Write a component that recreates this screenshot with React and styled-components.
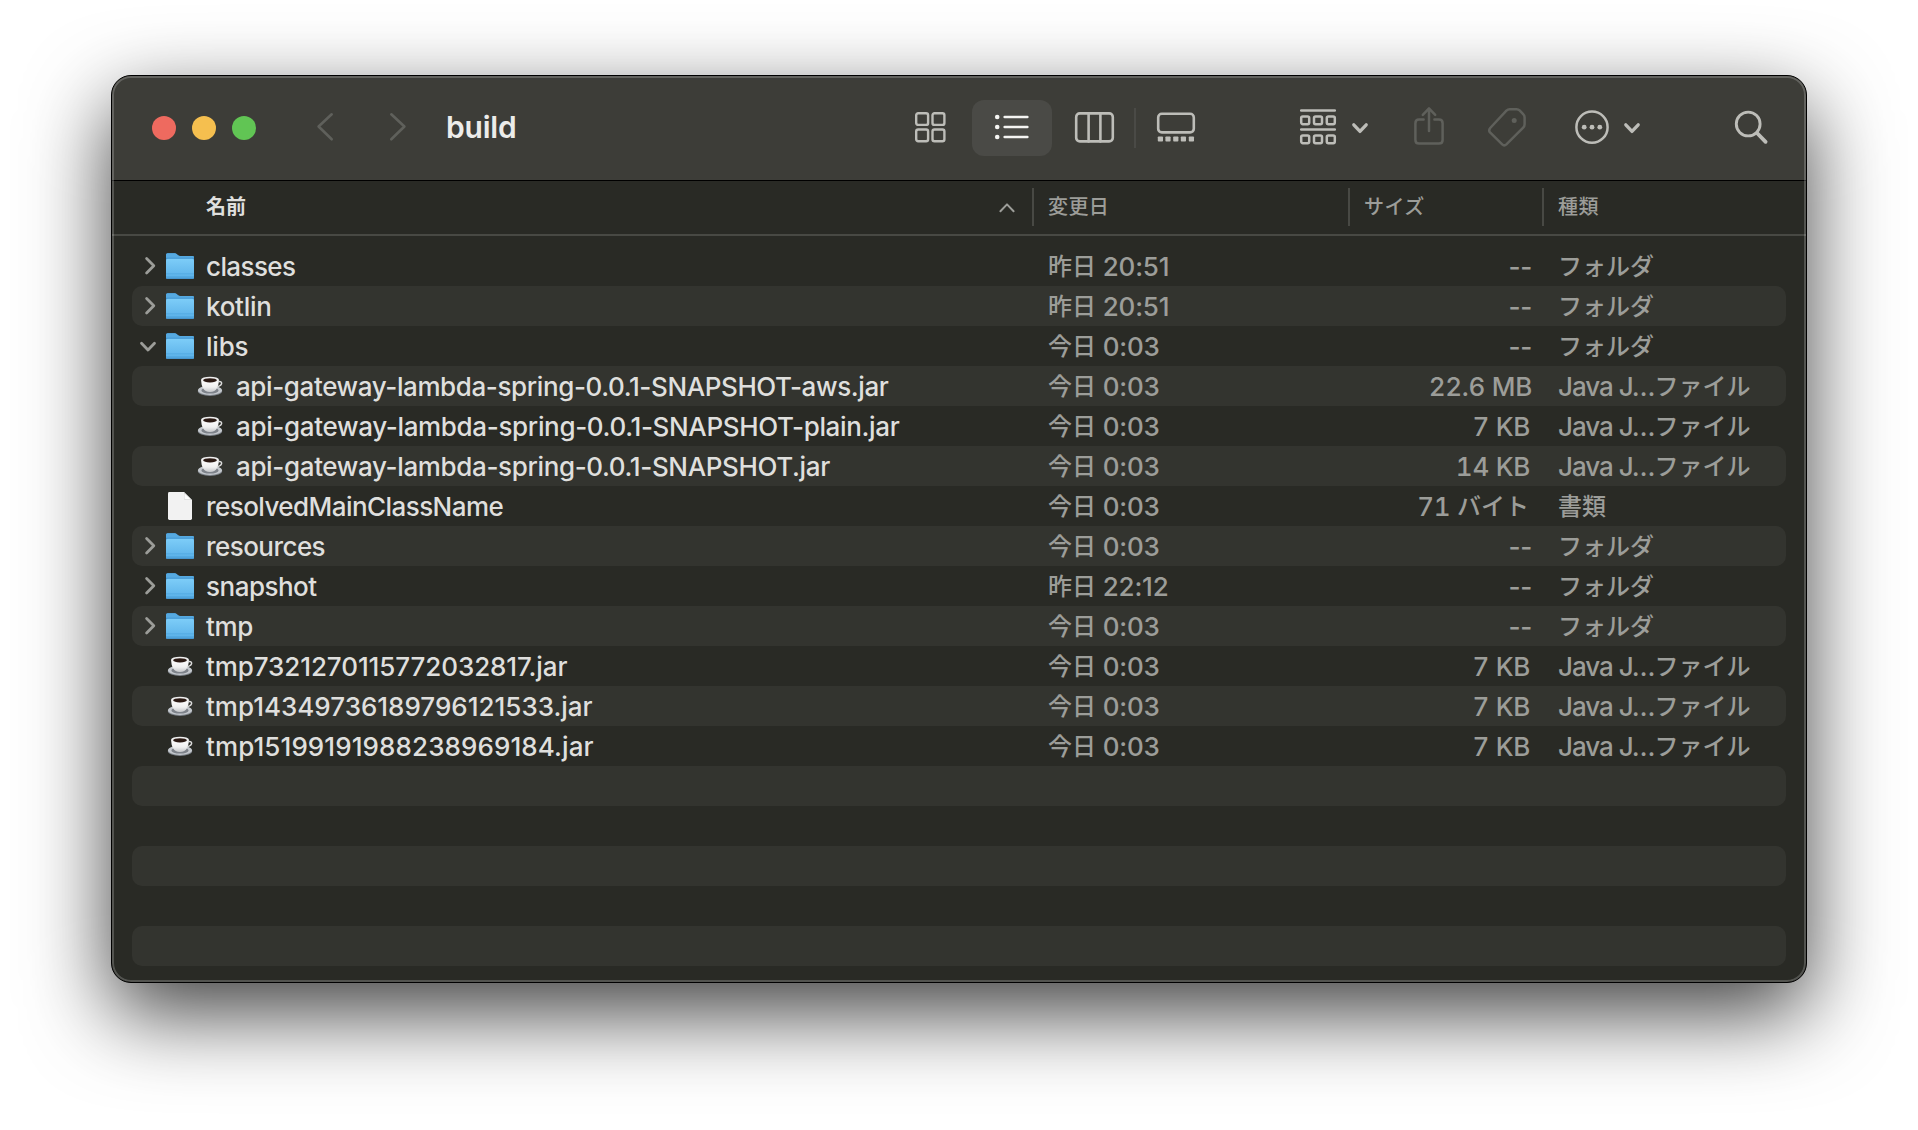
import React from "react";
import styled, { createGlobalStyle, css } from "styled-components";

const color = {
  toolbar: "#3d3d38",
  body: "#292a25",
  stripe: "#33342f",
  selected: "#4a4a46",
  icon: "#bdbdb8",
  iconOff: "#5f605b",
  text: "#dfdfdd",
  textDim: "#9c9d99",
  rule: "#484944",
};

const GlobalStyle = createGlobalStyle`
  * { box-sizing: border-box; }
  html, body { margin: 0; background: #fff; }
  body {
    font-family: "Inter", "Noto Sans CJK JP", sans-serif;
    -webkit-font-smoothing: antialiased;
    overflow: hidden;
  }
`;

const Desktop = styled.div`
  width: 1918px;
  height: 1130px;
  padding: 75px 111px 147px;
  overflow: hidden;
`;

const Window = styled.div`
  position: relative;
  display: flex;
  flex-direction: column;
  height: 908px;
  border: 1px solid #000;
  border-radius: 20px;
  overflow: hidden;
  background: ${color.body};
  box-shadow: 0 30px 84px rgba(0, 0, 0, 0.75);

  &::after {
    content: "";
    position: absolute;
    inset: 0;
    border-radius: 19px;
    box-shadow: inset 0 0 0 2px rgba(255, 255, 255, 0.2);
    pointer-events: none;
  }
`;

const Toolbar = styled.header`
  display: flex;
  align-items: center;
  height: 105px;
  padding-left: 40px;
  background: ${color.toolbar};
  border-bottom: 1px solid #000;
`;

const Lights = styled.div`
  display: flex;
  gap: 16px;
`;

const Light = styled.span`
  width: 24px;
  height: 24px;
  border-radius: 50%;
  background: ${(p) => p.$tone};
`;

const Nav = styled.nav`
  display: flex;
  align-items: center;
  gap: 57px;
  margin-left: 61px;
  padding-bottom: 2px;
`;

const Title = styled.h1`
  width: 443px;
  margin: 0 0 0 40px;
  padding-bottom: 2px;
  font-size: 30px;
  font-weight: 600;
  line-height: 40px;
  letter-spacing: -0.2px;
  color: #ececea;
`;

const Views = styled.div`
  display: flex;
  align-items: center;
`;

const Segment = styled.span`
  display: flex;
  align-items: center;
  justify-content: center;
  width: 80px;
  height: 56px;
  margin: 0 1px;
  padding-bottom: 2px;
  border-radius: 12px;
  background: ${(p) => (p.$active ? color.selected : "transparent")};
`;

const SegmentRule = styled.i`
  width: 2px;
  height: 40px;
  margin: 0 -1px;
  background: ${color.selected};
`;

const Tool = styled.span`
  display: flex;
  align-items: center;
  gap: ${(p) => p.$gap || 0}px;
  margin-left: ${(p) => p.$before}px;
  padding-bottom: 2px;
`;

const Icon = styled.svg`
  display: block;
  flex: none;
  overflow: visible;
  fill: none;
  stroke: ${(p) => p.$tone || color.icon};
  stroke-width: ${(p) => p.$weight || 2.5};
  stroke-linecap: round;
  stroke-linejoin: round;
`;

const HeaderRow = styled.div`
  display: grid;
  grid-template-columns: 920px 316px 194px 1fr;
  height: 55px;
  padding-top: 7px;
  border-bottom: 2px solid ${color.rule};
`;

const HeaderCell = styled.div`
  display: flex;
  align-items: center;
  justify-content: space-between;
  height: 38px;
  padding-left: 14px;
  border-left: 2px solid ${color.rule};
  font-size: 20px;
  font-weight: 500;
  letter-spacing: 0.4px;
  line-height: 38px;
  color: ${color.textDim};

  ${(p) =>
    p.$sorted &&
    css`
      padding: 0 17px 0 94px;
      border-left: 0;
      font-weight: 700;
      letter-spacing: 0;
      color: ${color.text};
    `}
`;

const List = styled.div`
  padding: 10px 20px 0;
`;

const Row = styled.div`
  display: grid;
  grid-template-columns: 916px 302px 182px 1fr;
  height: 40px;
  border-radius: 10px;
  font-size: 26px;
  font-weight: 500;
  line-height: 40px;
  white-space: pre;
  color: ${color.textDim};

  &:nth-child(even) {
    background: ${color.stripe};
  }
`;

const NameCell = styled.div`
  display: flex;
  align-items: center;
  height: 40px;
  padding-left: ${(p) => (p.$nested ? 30 : 0)}px;
  color: ${color.text};
`;

const Disclosure = styled.span`
  display: flex;
  align-items: center;
  flex: none;
  width: 34px;
  height: 40px;
  padding-left: ${(p) => (p.$open ? 8 : 13)}px;
  padding-top: ${(p) => (p.$open ? 1 : 0)}px;
  padding-bottom: ${(p) => (p.$open ? 0 : 1)}px;
`;

const FileName = styled.span`
  margin-left: 12px;
  padding-top: 2px;
  letter-spacing: ${(p) => p.$track}px;
`;

const Cell = styled.div`
  padding-top: 1px;
`;

const DateCell = styled(Cell)`
  letter-spacing: -0.2px;
`;

const SizeCell = styled(Cell)`
  text-align: right;
  font-variant-numeric: ${(p) => (p.$empty ? "normal" : "tabular-nums")};
  letter-spacing: -0.3px;
  padding-right: ${(p) => p.$inset || 0}px;
`;

const KindCell = styled(Cell)`
  padding-left: 26px;
  letter-spacing: -1px;
`;

const Japanese = styled.span`
  font-family: "Noto Sans CJK JP", sans-serif;
  font-size: 24px;
  font-weight: 500;
  line-height: 1;
  letter-spacing: 0;
  vertical-align: 1px;
`;

const Back = () => (
  <Icon width="16" height="28" viewBox="0 0 16 28" $tone={color.iconOff} $weight={2.6}>
    <path d="M14.7 1.3 1.6 13.5 14.7 26.3" />
  </Icon>
);

const Forward = () => (
  <Icon width="16" height="28" viewBox="0 0 16 28" $tone={color.iconOff} $weight={2.6}>
    <path d="M1.3 1.3 14.4 13.5 1.3 26.3" />
  </Icon>
);

const GridIcon = () => (
  <Icon width="31" height="31" viewBox="0 0 31 31" $weight={2.4}>
    {[1.2, 17.5].map((x) =>
      [1.2, 17.5].map((y) => <rect key={x + "-" + y} x={x} y={y} width="11.9" height="11.7" rx="2" />)
    )}
  </Icon>
);

const ListIcon = () => (
  <Icon width="34" height="28" viewBox="0 0 34 28" $tone="#f4f4f2" $weight={2.5}>
    {[4, 14, 24].map((y) => (
      <g key={y}>
        <circle cx="2.2" cy={y} r="2.3" fill="#f4f4f2" stroke="none" />
        <path d={`M9.6 ${y}H32.4`} />
      </g>
    ))}
  </Icon>
);

const ColumnsIcon = () => (
  <Icon width="39" height="31" viewBox="0 0 39 31" $weight={2.6}>
    <rect x="1.2" y="1.4" width="36.6" height="28" rx="3.6" />
    <path d="M13.6 1.4v28M25.4 1.4v28" />
  </Icon>
);

const GalleryIcon = () => (
  <Icon width="38" height="31" viewBox="0 0 38 31" $weight={2.6}>
    <rect x="1.2" y="1.8" width="35.6" height="18.6" rx="3.6" />
    {[0.8, 8.4, 16.2, 23.8, 31.8].map((x) => (
      <rect key={x} x={x} y="24.4" width="5.2" height="5.2" rx="0.8" fill={color.icon} stroke="none" />
    ))}
  </Icon>
);

const GroupIcon = () => (
  <Icon width="36" height="36" viewBox="0 0 36 36" $weight={2.5}>
    <path d="M1.2 1.6H34.8M1.2 20.6H34.8" />
    {[1.2, 14, 26.8].map((x) =>
      [7.4, 26.4].map((y) => <rect key={x + "-" + y} x={x} y={y} width="8" height="7.8" rx="1.6" />)
    )}
  </Icon>
);

const MenuChevron = () => (
  <Icon width="16" height="10" viewBox="0 0 16 10" $weight={3.3}>
    <path d="M1.8 2.8 8 9.4 14.2 2.8" />
  </Icon>
);

const ShareIcon = () => (
  <Icon width="30" height="40" viewBox="0 0 30 40" $tone={color.iconOff}>
    <path d="M9.6 12.6H5Q1.4 12.6 1.4 16.2V33Q1.4 36.6 5 36.6H25Q28.6 36.6 28.6 33V16.2Q28.6 12.6 25 12.6H20.4" />
    <path d="M15 24V1.8M8.8 7.8 15 1.4 21.2 7.8" />
  </Icon>
);

const TagIcon = () => (
  <Icon width="38" height="38" viewBox="0 0 38 38" $tone={color.iconOff}>
    <path d="M18.4 2.6Q19.8 1.2 21.8 1.2H28.6Q30.4 1.2 31.6 2.4L35.4 6.4Q36.6 7.6 36.6 9.4V16.2Q36.6 18.2 35.2 19.6L18.4 36.4Q16.2 38.4 14.2 36.4L1.8 24.2Q0.4 22.2 2.2 20Z" />
    <circle cx="26.2" cy="12.4" r="2.5" fill={color.iconOff} stroke="none" />
  </Icon>
);

const MoreIcon = () => (
  <Icon width="34" height="34" viewBox="0 0 34 34">
    <circle cx="17" cy="17.2" r="15.6" />
    {[9.2, 17, 24.8].map((x) => (
      <circle key={x} cx={x} cy="17.2" r="2.4" fill={color.icon} stroke="none" />
    ))}
  </Icon>
);

const SearchIcon = () => (
  <Icon width="33" height="33" viewBox="0 0 33 33" $weight={2.9}>
    <circle cx="13.2" cy="13" r="11.9" />
    <path d="M22 22 30.6 30.8" strokeWidth="3.8" />
  </Icon>
);

const SortArrow = () => (
  <Icon width="16" height="10" viewBox="0 0 16 10" $tone={color.textDim} $weight={2}>
    <path d="M1.4 9.2 8 2.4 14.6 9.2" />
  </Icon>
);

const ClosedArrow = () => (
  <Icon width="11" height="18" viewBox="0 0 11 18" $tone={color.textDim} $weight={2.8}>
    <path d="M1.6 1.6 8.8 8.8 1.6 16" />
  </Icon>
);

const OpenArrow = () => (
  <Icon width="16" height="11" viewBox="0 0 16 11" $tone={color.textDim} $weight={2.8}>
    <path d="M1.5 2.2 8 9 14.5 2.2" />
  </Icon>
);

const FolderIcon = () => (
  <Icon width="28" height="28" viewBox="0 0 28 28">
    <g stroke="none">
      <path d="M0 2.8Q0 1.2 1.6 1.2H8.6Q9.8 1.2 10.6 2L12 3.3Q12.8 4 14 4H26.6Q28 4 28 5.4V24H0Z" fill="#3f93d0" />
      <path d="M0 2.8Q0 1.2 1.6 1.2H8.6Q9.8 1.2 10.6 2L12 3.3Q12.8 4 14 4H26.6Q28 4 28 5.4V5.8H0Z" fill="#56a9e0" />
      <path d="M0 8.4Q0 6.8 1.6 6.8H26.4Q28 6.8 28 8.4V25.4Q28 27 26.6 27H1.4Q0 27 0 25.4Z" fill="url(#folderFace)" />
      <path d="M0 21.4H28V22.2H0ZM0 24H28V24.8H0Z" fill="#4fa6df" />
      <path d="M0 25.6H28Q28 27 26.6 27H1.4Q0 27 0 25.6Z" fill="#4796cf" />
    </g>
  </Icon>
);

const CupIcon = () => (
  <Icon width="28" height="28" viewBox="0 0 28 28">
    <g stroke="none">
      <ellipse cx="14" cy="19" rx="12.2" ry="5" fill="#7f858c" />
      <ellipse cx="14" cy="18.3" rx="12" ry="4.7" fill="#c3c7cc" />
      <ellipse cx="14" cy="18.4" rx="8.6" ry="3.2" fill="#7d8289" />
      <path d="M5.2 7.8C5.2 13.8 7 20 14 20S22.8 13.8 22.8 7.8Z" fill="url(#cupFace)" />
      <ellipse cx="14" cy="7.8" rx="8.9" ry="3.1" fill="#efefef" />
      <ellipse cx="14" cy="8.3" rx="6.9" ry="2.1" fill="#2b1a14" />
    </g>
    <path d="M22.6 9.7C26.6 8.7 27 13.4 21.6 14.6" stroke="#dcdcdc" strokeWidth="1.5" />
  </Icon>
);

const DocumentIcon = () => (
  <Icon width="28" height="28" viewBox="0 0 28 28">
    <g stroke="none">
      <path d="M2 1.4Q2 0 3.4 0H18L26 8V26.6Q26 28 24.6 28H3.4Q2 28 2 26.6Z" fill="#f2f2f2" />
      <path d="M18 0 26 8H19.4Q18 8 18 6.6Z" fill="#c9c9c9" />
      <path d="M18.4 1.2 25 7.6H19.6Q18.4 7.6 18.4 6.6Z" fill="#fdfdfd" />
    </g>
  </Icon>
);

const Gradients = () => (
  <svg width="0" height="0" style={{ position: "absolute" }}>
    <defs>
      <linearGradient id="folderFace" x1="0" y1="0" x2="0" y2="1">
        <stop offset="0" stopColor="#7dcdf8" />
        <stop offset="1" stopColor="#5ab0e8" />
      </linearGradient>
      <linearGradient id="cupFace" x1="0" y1="0" x2="0" y2="1">
        <stop offset="0" stopColor="#ffffff" />
        <stop offset="0.6" stopColor="#efefef" />
        <stop offset="1" stopColor="#c4c6c9" />
      </linearGradient>
    </defs>
  </svg>
);

const icons = { folder: FolderIcon, jar: CupIcon, file: DocumentIcon };

const files = [
  { name: "classes", type: "folder", track: -0.6, day: "昨日", time: "20:51" },
  { name: "kotlin", type: "folder", track: -0.3, day: "昨日", time: "20:51" },
  { name: "libs", type: "folder", open: true, track: -0.2, day: "今日", time: "0:03" },
  { name: "api-gateway-lambda-spring-0.0.1-SNAPSHOT-aws.jar", type: "jar", nested: true, track: -0.39, day: "今日", time: "0:03", size: "22.6 MB" },
  { name: "api-gateway-lambda-spring-0.0.1-SNAPSHOT-plain.jar", type: "jar", nested: true, track: -0.34, day: "今日", time: "0:03", size: "7 KB" },
  { name: "api-gateway-lambda-spring-0.0.1-SNAPSHOT.jar", type: "jar", nested: true, track: -0.36, day: "今日", time: "0:03", size: "14 KB" },
  { name: "resolvedMainClassName", type: "file", track: -0.56, day: "今日", time: "0:03", size: "71" },
  { name: "resources", type: "folder", track: -0.55, day: "今日", time: "0:03" },
  { name: "snapshot", type: "folder", track: -0.5, day: "昨日", time: "22:12" },
  { name: "tmp", type: "folder", track: -0.4, day: "今日", time: "0:03" },
  { name: "tmp7321270115772032817.jar", type: "jar", track: -0.09, day: "今日", time: "0:03", size: "7 KB" },
  { name: "tmp14349736189796121533.jar", type: "jar", track: 0, day: "今日", time: "0:03", size: "7 KB" },
  { name: "tmp15199191988238969184.jar", type: "jar", track: 0.1, day: "今日", time: "0:03", size: "7 KB" },
];

function Size({ file }) {
  if (file.type === "folder") return <SizeCell $empty>--</SizeCell>;
  if (file.type === "file")
    return (
      <SizeCell $inset={3}>
        {file.size} <Japanese>バイト</Japanese>
      </SizeCell>
    );
  return <SizeCell $inset={file.size.endsWith("KB") ? 2 : 0}>{file.size}</SizeCell>;
}

function Kind({ type }) {
  if (type === "folder") return <KindCell><Japanese>フォルダ</Japanese></KindCell>;
  if (type === "file") return <KindCell><Japanese>書類</Japanese></KindCell>;
  return <KindCell>Java J…<Japanese>ファイル</Japanese></KindCell>;
}

function FileRow({ file }) {
  const Glyph = icons[file.type];
  return (
    <Row>
      <NameCell $nested={file.nested}>
        <Disclosure $open={file.open}>
          {file.type === "folder" && (file.open ? <OpenArrow /> : <ClosedArrow />)}
        </Disclosure>
        <Glyph />
        <FileName $track={file.track}>{file.name}</FileName>
      </NameCell>
      <DateCell><Japanese>{file.day}</Japanese> {file.time}</DateCell>
      <Size file={file} />
      <Kind type={file.type} />
    </Row>
  );
}

export default function App() {
  return (
    <Desktop>
      <GlobalStyle />
      <Gradients />
      <Window>
        <Toolbar>
          <Lights>
            <Light $tone="#ee6a5f" />
            <Light $tone="#f5bf4f" />
            <Light $tone="#61c554" />
          </Lights>
          <Nav>
            <Back />
            <Forward />
          </Nav>
          <Title>build</Title>
          <Views>
            <Segment><GridIcon /></Segment>
            <Segment $active><ListIcon /></Segment>
            <Segment><ColumnsIcon /></Segment>
            <SegmentRule />
            <Segment><GalleryIcon /></Segment>
          </Views>
          <Tool $before={83} $gap={16}><GroupIcon /><MenuChevron /></Tool>
          <Tool $before={46}><ShareIcon /></Tool>
          <Tool $before={44}><TagIcon /></Tool>
          <Tool $before={49} $gap={15}><MoreIcon /><MenuChevron /></Tool>
          <Tool $before={95}><SearchIcon /></Tool>
        </Toolbar>
        <HeaderRow>
          <HeaderCell $sorted>名前<SortArrow /></HeaderCell>
          <HeaderCell>変更日</HeaderCell>
          <HeaderCell>サイズ</HeaderCell>
          <HeaderCell>種類</HeaderCell>
        </HeaderRow>
        <List>
          {files.map((file) => <FileRow key={file.name} file={file} />)}
          {[1, 2, 3, 4, 5].map((n) => <Row key={n} />)}
        </List>
      </Window>
    </Desktop>
  );
}
